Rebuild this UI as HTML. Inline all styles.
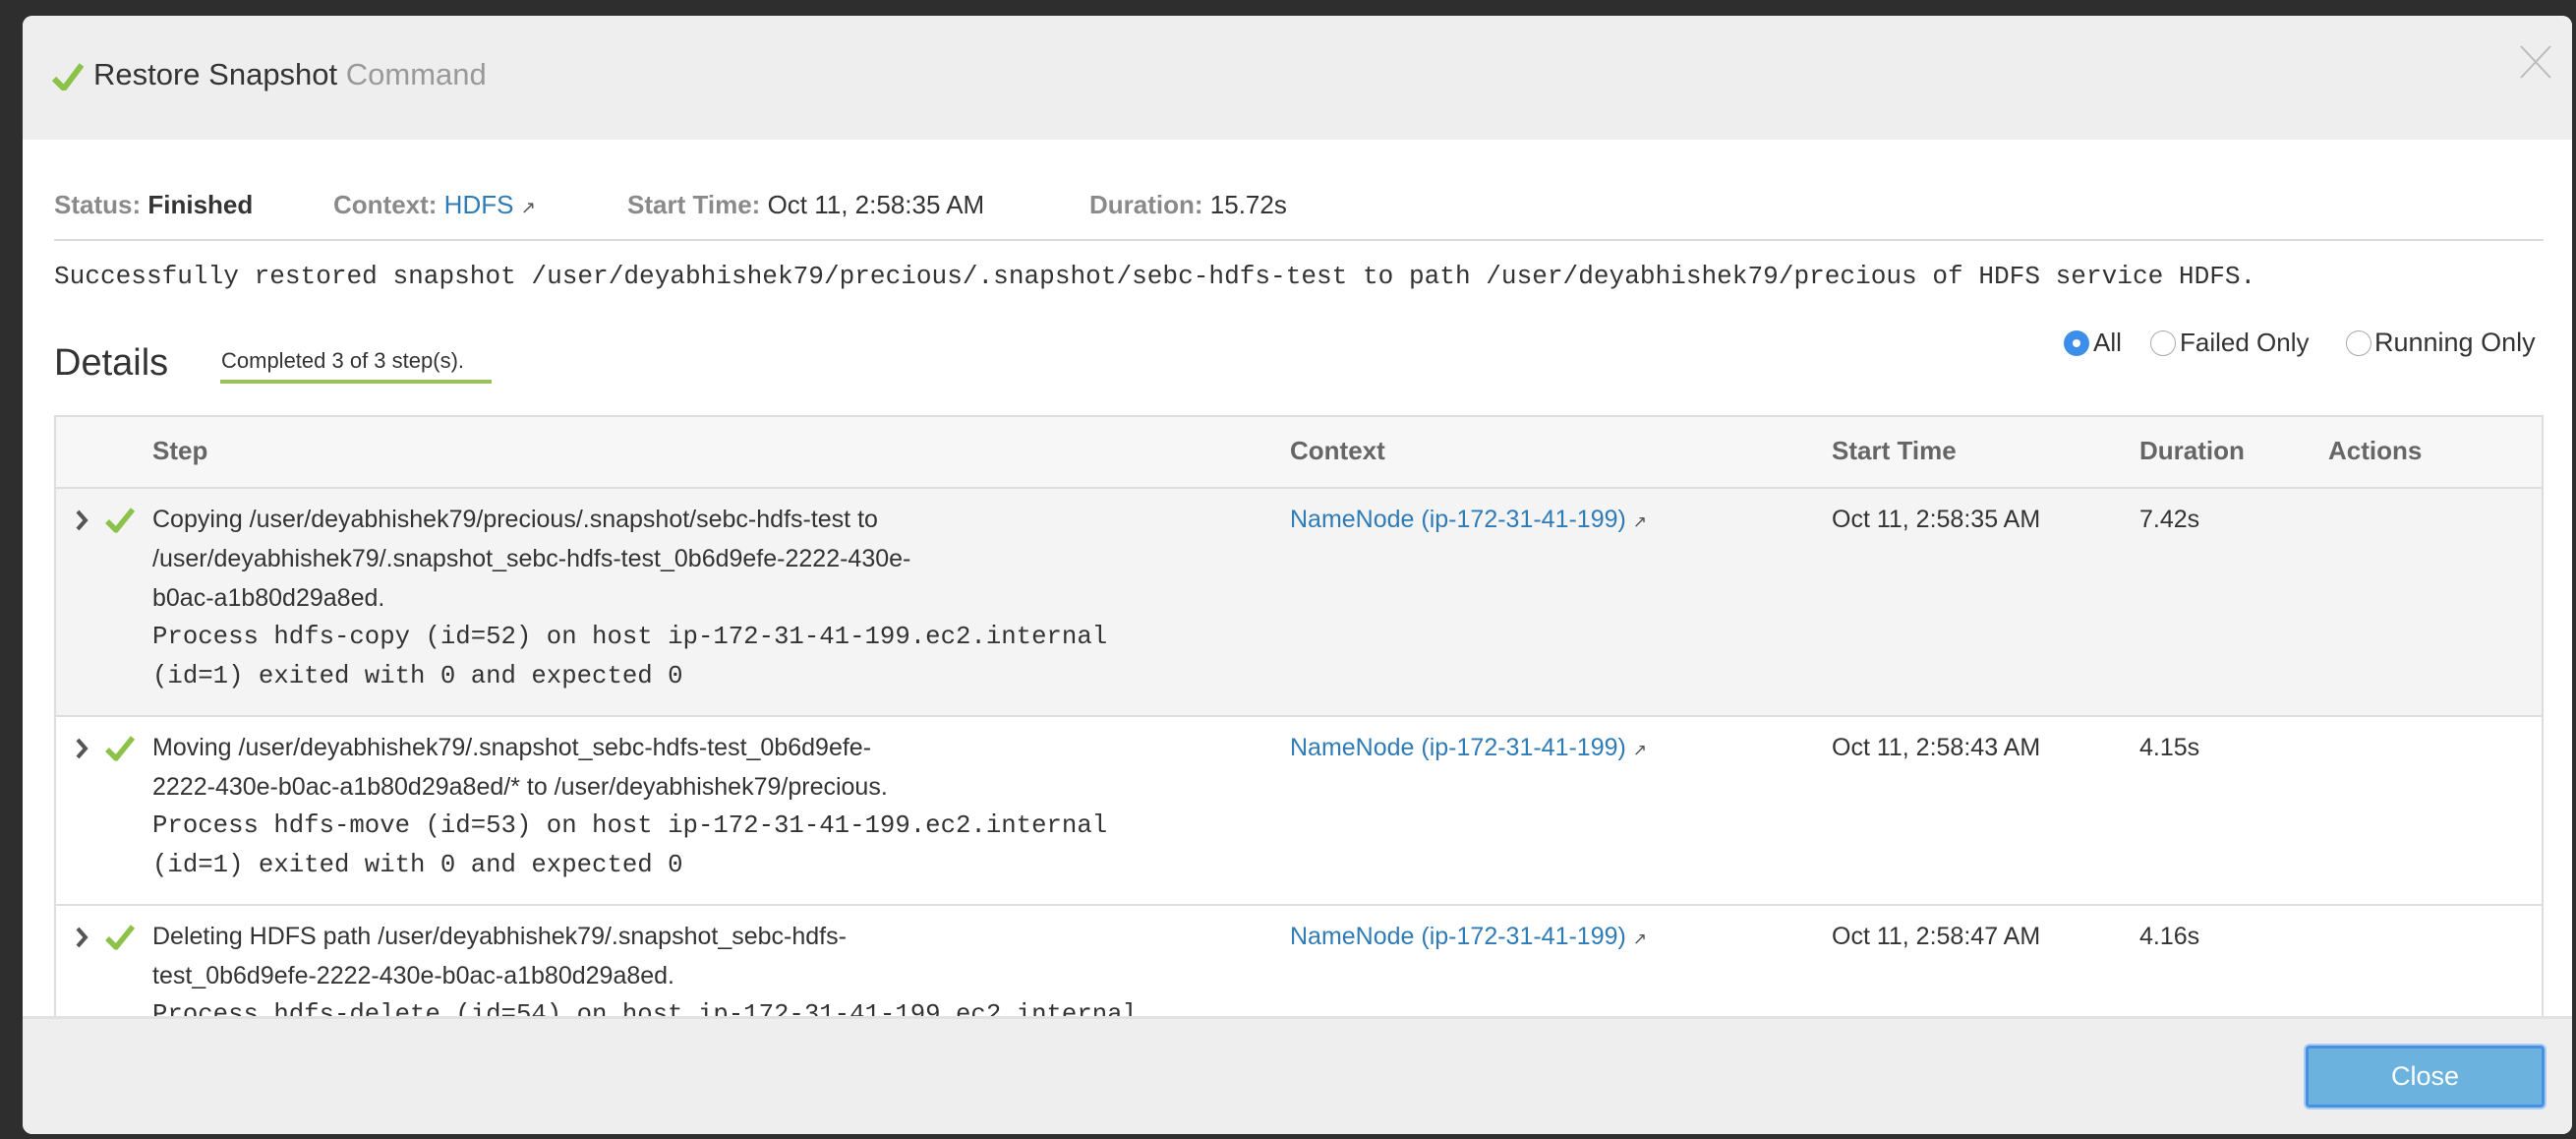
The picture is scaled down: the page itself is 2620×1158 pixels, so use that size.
<!DOCTYPE html>
<html><head><meta charset="utf-8"><style>
*{margin:0;padding:0;box-sizing:border-box}
body{width:2620px;height:1158px;background:#2e2e2e;font-family:"Liberation Sans",Arial,sans-serif;position:relative;overflow:hidden;color:#333}
.a{position:absolute;white-space:nowrap}
#modal{position:absolute;left:23px;top:16px;width:2593px;height:1137px;background:#fff;border-radius:10px;overflow:hidden}
#hdr{position:absolute;left:0;top:0;width:100%;height:126px;background:#efeeef}
#ftr{position:absolute;left:0;top:1017px;width:100%;height:120px;background:#efeeef;border-top:3px solid #e2e2e2}
.lbl{color:#8a8a8a;font-weight:bold}
.link{color:#2f7bb6}
.row{position:absolute;left:32px;width:2532px;border-top:2px solid #ddd}
.t{font-size:25px;line-height:40px}
.m{font-family:"Liberation Mono",monospace;font-size:25.7px;line-height:40px}
.chev{position:absolute;font-size:34px;font-weight:bold;color:#555;line-height:34px}
</style></head><body>
<div id="modal">
 <div id="hdr">
  <svg class="a" style="left:30px;top:48px" width="32" height="28" viewBox="0 0 32 28"><path d="M2 16 L12 26 L30 2" fill="none" stroke="#8bc34a" stroke-width="6" stroke-linejoin="round"/></svg>
  <div class="a" style="left:72px;top:42px;font-size:31px;color:#333">Restore Snapshot <span style="color:#999">Command</span></div>
  <svg class="a" style="left:2540px;top:30px" width="32" height="34" viewBox="0 0 32 34"><path d="M1 1 L31 33 M31 1 L1 33" stroke="#bbb" stroke-width="2"/></svg>
 </div>
 <div class="a" style="left:32px;top:177px;font-size:26px"><span class="lbl">Status:</span> <b>Finished</b></div>
 <div class="a" style="left:316px;top:177px;font-size:26px"><span class="lbl">Context:</span> <span class="link">HDFS</span> <span style="font-size:18px;color:#555">&#x2197;</span></div>
 <div class="a" style="left:615px;top:177px;font-size:26px"><span class="lbl">Start Time:</span> Oct 11, 2:58:35 AM</div>
 <div class="a" style="left:1085px;top:177px;font-size:26px"><span class="lbl">Duration:</span> 15.72s</div>
 <div class="a" style="left:32px;top:227px;width:2532px;height:2px;background:#ddd"></div>
 <div class="a m" style="left:32px;top:245px;font-size:26.1px">Successfully restored snapshot /user/deyabhishek79/precious/.snapshot/sebc-hdfs-test to path /user/deyabhishek79/precious of HDFS service HDFS.</div>
 <div class="a" style="left:32px;top:332px;font-size:38px;color:#333">Details</div>
 <div class="a" style="left:202px;top:338px;font-size:22px">Completed 3 of 3 step(s).</div>
 <div class="a" style="left:201px;top:370px;width:276px;height:4px;background:#98c15c"></div>
 <div class="a" style="left:2076px;top:320px;width:26px;height:26px;border-radius:50%;background:#3b8eea"><div style="position:absolute;left:9px;top:9px;width:8px;height:8px;border-radius:50%;background:#fff"></div></div>
 <div class="a" style="left:2106px;top:317px;font-size:26px">All</div>
 <div class="a" style="left:2164px;top:320px;width:26px;height:26px;border-radius:50%;border:1px solid #aaa;background:#fff"></div>
 <div class="a" style="left:2194px;top:317px;font-size:26px">Failed Only</div>
 <div class="a" style="left:2363px;top:320px;width:26px;height:26px;border-radius:50%;border:1px solid #aaa;background:#fff"></div>
 <div class="a" style="left:2392px;top:317px;font-size:27px">Running Only</div>

 <div class="a" style="left:32px;top:406px;width:2532px;height:620px;border:2px solid #ddd;border-bottom:none"></div>
 <div class="a" style="left:34px;top:408px;width:2528px;height:71px;background:#f7f7f7"></div>
 <div class="a" style="left:132px;top:427px;font-size:26px;font-weight:bold;color:#666">Step</div>
 <div class="a" style="left:1289px;top:427px;font-size:26px;font-weight:bold;color:#666">Context</div>
 <div class="a" style="left:1840px;top:427px;font-size:26px;font-weight:bold;color:#666">Start Time</div>
 <div class="a" style="left:2153px;top:427px;font-size:26px;font-weight:bold;color:#666">Duration</div>
 <div class="a" style="left:2345px;top:427px;font-size:26px;font-weight:bold;color:#666">Actions</div>

 <div class="row" style="top:479px;height:232px;background:#f4f4f4;border-left:2px solid #ddd;border-right:2px solid #ddd"></div>
 <div class="row" style="top:711px;height:192px;background:#fff;border-left:2px solid #ddd;border-right:2px solid #ddd"></div>
 <div class="row" style="top:903px;height:120px;background:#fff;border-left:2px solid #ddd;border-right:2px solid #ddd"></div>

 <!-- row 1 -->
 <svg class="a" style="left:53px;top:502px" width="14" height="22" viewBox="0 0 14 22"><path d="M3 2 L11 11 L3 20" fill="none" stroke="#555" stroke-width="4"/></svg>
 <svg class="a" style="left:84px;top:500px" width="30" height="26" viewBox="0 0 30 26"><path d="M2 14 L11 23 L28 2" fill="none" stroke="#8bc34a" stroke-width="5.5" stroke-linejoin="round"/></svg>
 <div class="a t" style="left:132px;top:492px">Copying /user/deyabhishek79/precious/.snapshot/sebc-hdfs-test to<br>/user/deyabhishek79/.snapshot_sebc-hdfs-test_0b6d9efe-2222-430e-<br>b0ac-a1b80d29a8ed.</div>
 <div class="a m" style="left:132px;top:612px">Process hdfs-copy (id=52) on host ip-172-31-41-199.ec2.internal<br>(id=1) exited with 0 and expected 0</div>
 <div class="a t link" style="left:1289px;top:492px">NameNode (ip-172-31-41-199) <span style="font-size:17px;color:#555">&#x2197;</span></div>
 <div class="a t" style="left:1840px;top:492px">Oct 11, 2:58:35 AM</div>
 <div class="a t" style="left:2153px;top:492px">7.42s</div>
 <!-- row 2 -->
 <svg class="a" style="left:53px;top:734px" width="14" height="22" viewBox="0 0 14 22"><path d="M3 2 L11 11 L3 20" fill="none" stroke="#555" stroke-width="4"/></svg>
 <svg class="a" style="left:84px;top:732px" width="30" height="26" viewBox="0 0 30 26"><path d="M2 14 L11 23 L28 2" fill="none" stroke="#8bc34a" stroke-width="5.5" stroke-linejoin="round"/></svg>
 <div class="a t" style="left:132px;top:724px">Moving /user/deyabhishek79/.snapshot_sebc-hdfs-test_0b6d9efe-<br>2222-430e-b0ac-a1b80d29a8ed/* to /user/deyabhishek79/precious.</div>
 <div class="a m" style="left:132px;top:804px">Process hdfs-move (id=53) on host ip-172-31-41-199.ec2.internal<br>(id=1) exited with 0 and expected 0</div>
 <div class="a t link" style="left:1289px;top:724px">NameNode (ip-172-31-41-199) <span style="font-size:17px;color:#555">&#x2197;</span></div>
 <div class="a t" style="left:1840px;top:724px">Oct 11, 2:58:43 AM</div>
 <div class="a t" style="left:2153px;top:724px">4.15s</div>
 <!-- row 3 -->
 <svg class="a" style="left:53px;top:926px" width="14" height="22" viewBox="0 0 14 22"><path d="M3 2 L11 11 L3 20" fill="none" stroke="#555" stroke-width="4"/></svg>
 <svg class="a" style="left:84px;top:924px" width="30" height="26" viewBox="0 0 30 26"><path d="M2 14 L11 23 L28 2" fill="none" stroke="#8bc34a" stroke-width="5.5" stroke-linejoin="round"/></svg>
 <div class="a t" style="left:132px;top:916px">Deleting HDFS path /user/deyabhishek79/.snapshot_sebc-hdfs-<br>test_0b6d9efe-2222-430e-b0ac-a1b80d29a8ed.</div>
 <div class="a m" style="left:132px;top:996px">Process hdfs-delete (id=54) on host ip-172-31-41-199.ec2.internal</div>
 <div class="a t link" style="left:1289px;top:916px">NameNode (ip-172-31-41-199) <span style="font-size:17px;color:#555">&#x2197;</span></div>
 <div class="a t" style="left:1840px;top:916px">Oct 11, 2:58:47 AM</div>
 <div class="a t" style="left:2153px;top:916px">4.16s</div>

 <div id="ftr">
  <div class="a" style="left:2322px;top:27px;width:243px;height:63px;background:#6cb2de;border:3px solid #4a90e2;border-radius:4px;box-shadow:0 0 0 2px #a9cdf2;color:#fff;font-size:27px;line-height:57px;text-align:center">Close</div>
 </div>
</div>
</body></html>
